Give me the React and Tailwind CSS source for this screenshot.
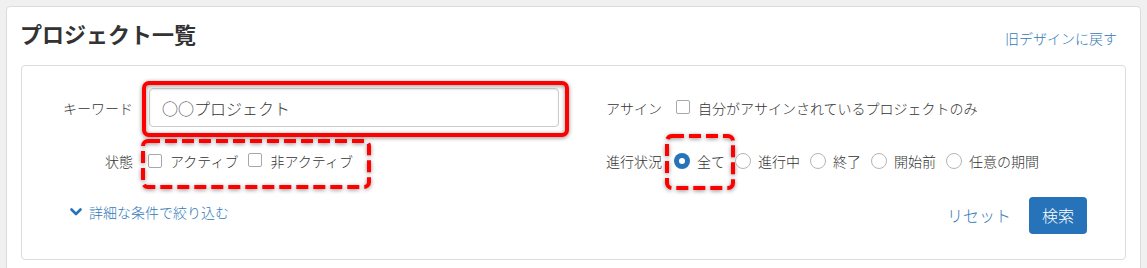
import React from 'react'

const FONT = { fontFamily: '"Noto Sans CJK JP", "Noto Sans", sans-serif' }

function Checkbox() {
  return <span className="inline-block h-[14px] w-[14px] shrink-0 rounded-[2px] border border-[#a8a8a8] bg-white" />
}

function Radio({ checked }) {
  if (checked) {
    return (
      <span className="flex h-4 w-4 shrink-0 items-center justify-center rounded-full bg-[#2773b9]">
        <span className="h-[6px] w-[6px] rounded-full bg-white" />
      </span>
    )
  }
  return <span className="inline-block h-4 w-4 shrink-0 rounded-full border border-[#b5b5b5] bg-white" />
}

// red dashed annotation frame drawn over content
function DashedMark({ className }) {
  return (
    <svg className={`pointer-events-none absolute overflow-visible drop-shadow-[0_1px_2px_rgba(0,0,0,0.45)] ${className}`}>
      <rect x="2" y="2" rx="5" className="[width:calc(100%_-_4px)] [height:calc(100%_-_4px)]" fill="none" stroke="#ff0000" strokeWidth="4" strokeDasharray="12 5" />
    </svg>
  )
}

const STATUS = ['全て', '進行中', '終了', '開始前', '任意の期間']

export default function App() {
  return (
    <div className="min-h-[268px] bg-[#f0f0f0] px-[6px] pt-[6px] font-light text-[#333]" style={FONT}>
      <div className="h-[300px] rounded-t-[4px] border border-[#dcdcdc] bg-white">
        {/* Header */}
        <div className="flex items-end justify-between pl-[13px] pr-[23px] pt-[10px]">
          <h1 className="text-[22px] font-bold leading-[32px] text-[#333]">プロジェクト一覧</h1>
          <a className="mb-[1px] text-[14px] leading-[20px] text-[#337ab7]">旧デザインに戻す</a>
        </div>

        {/* Search panel */}
        <div className="mx-[14px] mt-[16px] h-[195px] rounded-[4px] border border-[#dcdcdc] bg-white pt-[22px]">
          {/* Row 1 */}
          <div className="flex h-[39px] items-center">
            <div className="flex w-[584px] items-center">
              <div className="w-[111px] text-right text-[14px] leading-[20px]">キーワード</div>
              <div className="relative ml-[16px]">
                <div className="flex h-[39px] w-[410px] items-center rounded-[4px] border border-[#cccccc] px-3 text-[16px] text-[#333] shadow-[inset_0_1px_2px_rgba(0,0,0,0.08)]">
                  ○○プロジェクト
                </div>
                <span className="pointer-events-none absolute -bottom-[10px] -left-[7px] -right-[10px] -top-[7px] rounded-[7px] border-4 border-[#ff0000] drop-shadow-[0_1px_2px_rgba(0,0,0,0.45)]" />
              </div>
            </div>
            <div className="flex items-center text-[14px] leading-[20px]">
              <div className="w-[68px]">アサイン</div>
              <span className="ml-[2px]"><Checkbox /></span>
              <span className="ml-[8px]">自分がアサインされているプロジェクトのみ</span>
            </div>
          </div>

          {/* Row 2 */}
          <div className="mt-[20px] flex h-[28px] items-center text-[14px] leading-[20px]">
            <div className="flex w-[584px] items-center">
              <div className="w-[111px] text-right">状態</div>
              <div className="relative ml-[15px] flex h-[28px] items-center">
                <Checkbox />
                <span className="ml-[8px]">アクティブ</span>
                <span className="ml-[10px]"><Checkbox /></span>
                <span className="ml-[8px]">非アクティブ</span>
                <DashedMark className="-left-[7px] -top-[8px] h-[50px] w-[230px]" />
              </div>
            </div>
            <div className="flex items-center">
              <div className="w-[68px]">進行状況</div>
              <div className="flex items-center gap-[10px]">
                {STATUS.map((s, i) => (
                  <div key={s} className="relative flex h-[28px] items-center">
                    <Radio checked={i === 0} />
                    <span className="ml-[7px]">{s}</span>
                    {i === 0 && <DashedMark className="-left-[9px] -top-[13px] h-[56px] w-[70px]" />}
                  </div>
                ))}
              </div>
            </div>
          </div>

          {/* Row 3 */}
          <div className="mt-[22px] flex h-[37px] items-start justify-between pr-[38px]">
            <a className="ml-[48px] mt-[5px] flex items-center text-[14px] leading-[20px] text-[#337ab7]">
              <svg width="12" height="8" viewBox="0 0 12 8" className="mr-[7px]">
                <polyline points="1.5,1.5 6,6 10.5,1.5" fill="none" stroke="#2773b9" strokeWidth="2.6" strokeLinecap="round" strokeLinejoin="round" />
              </svg>
              詳細な条件で絞り込む
            </a>
            <div className="flex items-center">
              <a className="text-[16px] leading-[37px] text-[#337ab7]">リセット</a>
              <button className="ml-[18px] h-[37px] rounded-[4px] bg-[#2773b9] px-[13px] text-[16px] leading-[37px] text-white">検索</button>
            </div>
          </div>
        </div>
      </div>
    </div>
  )
}
